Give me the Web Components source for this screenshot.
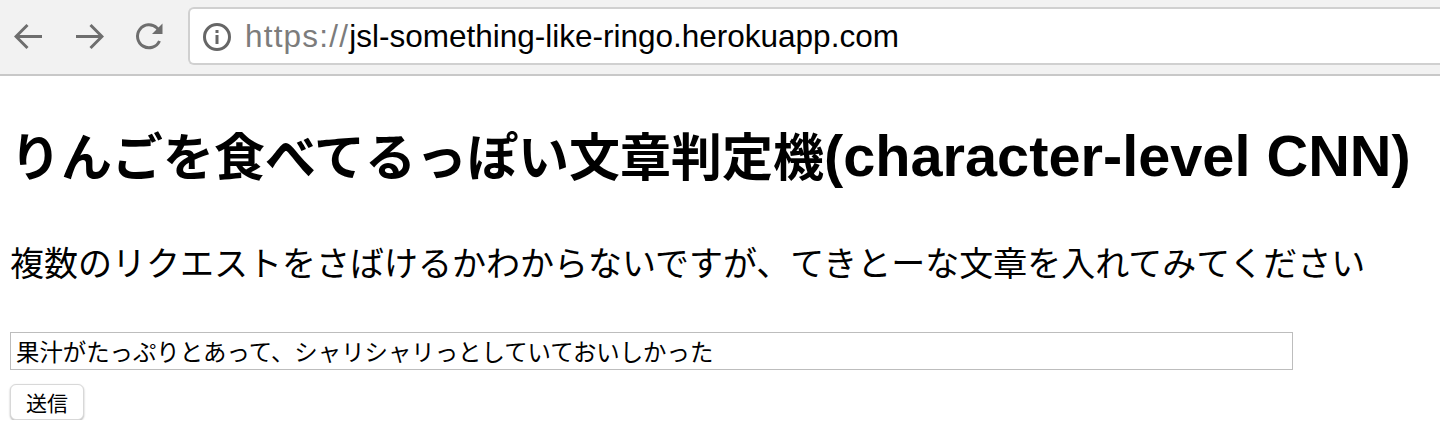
<!DOCTYPE html>
<html lang="ja">
<head>
<meta charset="utf-8">
<title>りんごを食べてるっぽい文章判定機</title>
<style>
    html, body { margin: 0; padding: 0; background: #fff; overflow: hidden; }
    body { font-family: "Liberation Sans", "Noto Sans CJK JP", sans-serif; color: #000; }
    .latin { font-size: 57.700px; }
</style>
</head>
<body>
<browser-toolbar url-scheme="https://" url-host="jsl-something-like-ringo.herokuapp.com"></browser-toolbar>
<judge-page>
    <span slot="title">りんごを食べてるっぽい文章判定機<span class="latin">(character-level CNN)</span></span>
    <span slot="lead">複数のリクエストをさばけるかわからないですが、てきとーな文章を入れてみてください</span>
</judge-page>

<script>
// ツールバーのボタン
class NavIcon extends HTMLElement {
    connectedCallback() {
        const paths = {
            back: '<path d="M28 15.500H2M13.500 4L2 15.500L13.500 27"/>',
            forward: '<path d="M2 15.500H28M16.500 4L28 15.500L16.500 27"/>',
            reload: '<path d="M25.500 20A11.500 11.500 0 1 1 23 7L26 10.500"/><path d="M28.500 2.500V13H18Z" fill="#6e6e6e" stroke="none"/>'
        };
        this.attachShadow({ mode: 'open' });
        this.shadowRoot.innerHTML = `
            <style>
                :host { display: block; width: 30px; height: 30px; }
                svg { display: block; fill: none; stroke: #6e6e6e; stroke-width: 3; }
            </style>
            <svg width="30" height="30" viewBox="0 0 30 30">${paths[this.getAttribute('name')]}</svg>
        `;
    }
}

// ブラウザのツールバー
class BrowserToolbar extends HTMLElement {
    connectedCallback() {
        this.attachShadow({ mode: 'open' });
        this.shadowRoot.innerHTML = `
            <style>
                :host {
                    display: flex;
                    align-items: center;
                    box-sizing: border-box;
                    height: 76px;
                    padding: 7px 0 10px 14px;
                    background: #f2f2f2;
                    border-bottom: 2px solid #c8c8c8;
                }
                .nav { display: flex; gap: 30px; }
                .omnibox {
                    flex: 1;
                    display: flex;
                    align-items: center;
                    box-sizing: border-box;
                    height: 58px;
                    margin-left: 24px;
                    padding: 2px 0 0 12px;
                    background: #fff;
                    border: 2px solid #d0d0d0;
                    border-right: none;
                    border-radius: 6px 0 0 6px;
                }
                .info { flex: none; margin-right: 13px; }
                .url { font-size: 31.500px; white-space: nowrap; color: #000; }
                .scheme { color: #7c7c7c; letter-spacing: 1.200px; }
            </style>
            <div class="nav">
                <nav-icon name="back"></nav-icon>
                <nav-icon name="forward"></nav-icon>
                <nav-icon name="reload"></nav-icon>
            </div>
            <div class="omnibox">
                <svg class="info" width="30" height="30" viewBox="0 0 30 30">
                    <circle cx="15" cy="15" r="12.500" fill="none" stroke="#666" stroke-width="3"/>
                    <rect x="13.500" y="13" width="3" height="9" fill="#666"/>
                    <rect x="13.500" y="8" width="3" height="3" fill="#666"/>
                </svg>
                <span class="url"><span class="scheme">${this.getAttribute('url-scheme')}</span>${this.getAttribute('url-host')}</span>
            </div>
        `;
    }
}

// 判定フォーム
class JudgeForm extends HTMLElement {
    connectedCallback() {
        this.attachShadow({ mode: 'open' });
        this.shadowRoot.innerHTML = `
            <style>
                :host { display: flex; flex-direction: column; align-items: flex-start; gap: 14px; }
                .field {
                    box-sizing: border-box;
                    width: 1283px;
                    height: 38px;
                    margin: 0;
                    padding: 0 5px;
                    border: 1px solid #bdbdbd;
                    border-radius: 0;
                    outline: none;
                    background: #fff;
                    color: #000;
                    font: 23.400px "Liberation Sans", "Noto Sans CJK JP", sans-serif;
                }
                .send {
                    box-sizing: border-box;
                    width: 74px;
                    height: 36px;
                    margin: 0;
                    padding: 0;
                    background: #fff;
                    border: 1px solid #d8d8d8;
                    border-radius: 6px;
                    box-shadow: 0 1px 2px rgba(0, 0, 0, 0.3);
                    color: #000;
                    font: 21px "Liberation Sans", "Noto Sans CJK JP", sans-serif;
                }
            </style>
            <input class="field" type="text" value="果汁がたっぷりとあって、シャリシャリっとしていておいしかった">
            <button class="send" type="button">送信</button>
        `;
    }
}

// ページ本体
class JudgePage extends HTMLElement {
    connectedCallback() {
        this.attachShadow({ mode: 'open' });
        this.shadowRoot.innerHTML = `
            <style>
                :host { display: block; padding: 48px 10px 0; }
                .title { margin: 0; font-size: 51px; line-height: 64px; font-weight: bold; white-space: nowrap; }
                .lead { margin: 49px 0 0; font-size: 34px; line-height: 48px; white-space: nowrap; }
                judge-form { margin-top: 44px; }
            </style>
            <h1 class="title"><slot name="title"></slot></h1>
            <p class="lead"><slot name="lead"></slot></p>
            <judge-form></judge-form>
        `;
    }
}

customElements.define('nav-icon', NavIcon);
customElements.define('browser-toolbar', BrowserToolbar);
customElements.define('judge-form', JudgeForm);
customElements.define('judge-page', JudgePage);
</script>
</body>
</html>
